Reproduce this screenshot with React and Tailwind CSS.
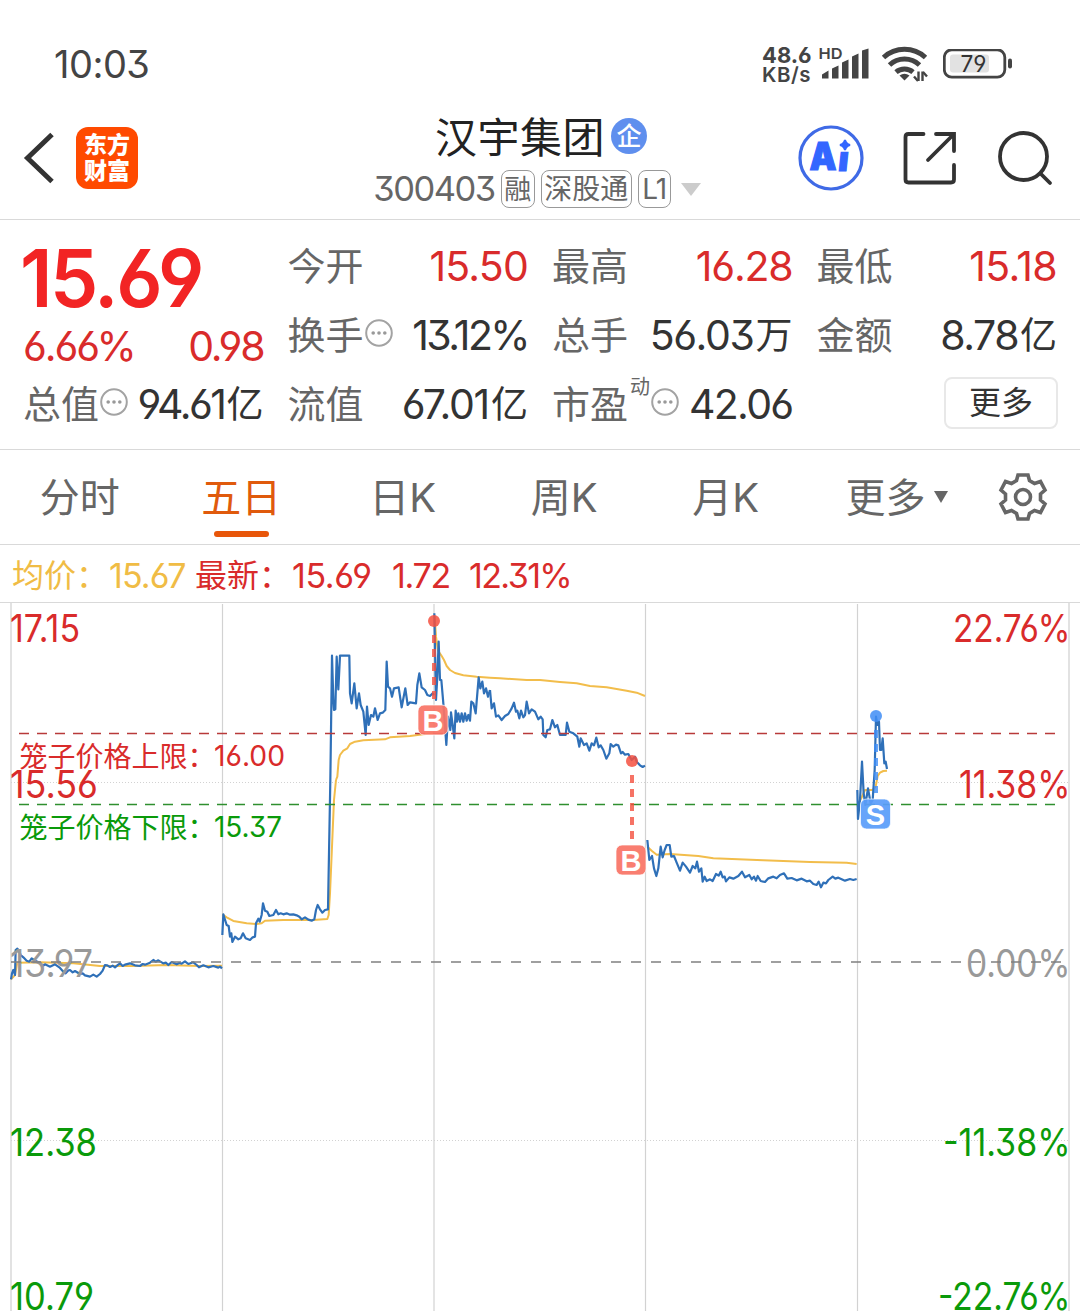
const quotes = [
  { label: "今开", value: "15.50", red: true, track: "tracking-[-0.8px]" },
  { label: "最高", value: "16.28", red: true, track: "tracking-[-1.2px]" },
  { label: "最低", value: "15.18", red: true, track: "tracking-[-0.6px]" },
  { label: "换手", value: "13.12%", info: true, track: "tracking-[-2.6px]" },
  { label: "总手", value: "56.03", unit: "万", track: "tracking-[-1.4px]" },
  { label: "金额", value: "8.78", unit: "亿", track: "tracking-[-1.5px]" },
]

const tabs = ["分时", "五日", "日K", "周K", "月K"]

const BLUE = "#2f70b8"
const GOLD = "#f2bd4b"

// price and average lines, every block has its own origin and a 1/3 scale
const blocks = [
  {
    origin: "translate(0 720) scale(0.33333)",
    avg: [
      "33,778 45,765 52,728 120,727 220,730 300,738 400,738 500,735 600,738 666,737",
      "667,583 680,592 700,603 740,610 770,612 785,610 795,602 850,600 940,600 982,597 986,585 990,520 996,380 1002,240 1008,180",
    ],
    price: [
      "33,778 36,760 40,750 45,765 47,690 52,686 57,692 62,705 70,712 80,722 88,725 95,715 105,722 120,728 128,738 135,733 150,740 165,733 178,742 190,755 197,760 204,752 210,750 218,757 225,753 240,762 248,760 255,766 270,770 280,764 290,770 300,762 308,752 315,735 322,736 330,741 338,737 345,742 352,736 360,730 368,738 375,734 390,730 405,736 420,738 428,732 435,734 450,728 460,720 467,725 475,721 490,730 498,728 505,735 515,726 530,733 538,729 545,731 555,724 565,732 580,727 590,735 597,742 610,736 625,742 640,738 655,743 660,740 666,745",
      "667,645 670,583 680,615 686,618 690,650 694,640 697,666 705,650 715,658 722,655 729,640 737,655 750,660 758,652 765,650 768,610 775,596 779,605 785,585 789,550 795,572 802,575 808,588 820,585 828,570 835,583 842,580 850,583 860,580 870,584 880,583 890,586 898,590 905,598 915,592 925,599 935,602 943,598 948,570 953,555 960,568 967,578 975,570 984,568 991,180",
    ],
  },
  {
    origin: "translate(310 600) scale(0.33333)",
    avg: [
      "78,540 82,530 86,480 90,465 100,452 112,445 120,432 135,425 160,421 225,418 240,412 300,408 340,403 372,400",
      "374,50 378,110 384,152 395,168 402,180 410,198 420,210 435,219 460,226 500,230 540,233",
    ],
    price: [
      "61,540 66,167 70,300 72,330 76,328 80,170 85,268 90,167 118,167 120,280 125,310 129,280 133,250 140,325 147,280 152,315 160,335 167,405 171,320 176,375 183,345 190,350 195,325 203,360 210,340 218,338 226,330 230,185 234,260 240,265 246,290 252,265 266,262 275,322 286,265 293,315 300,307 318,310 322,255 328,220 335,262 345,270 352,285 360,288 368,280 372,285",
      "373,40 378,300 382,230 386,125 390,240 394,240 400,310 409,435 414,350 421,390 423,337 428,375 433,415 437,332 441,365 445,340 450,365 455,340 460,365 465,340 470,362 475,345 480,362 484,305 490,310 497,340 506,232 511,265 517,245 522,280 528,265 534,290 540,270",
    ],
  },
  {
    origin: "translate(460 660) scale(0.33333)",
    avg: ["90,53 120,55 200,60 240,60 300,66 350,70 390,78 440,82 500,92 530,98 555,108"],
    price: [
      "90,90 95,145 102,130 108,170 115,166 125,180 135,168 145,162 155,145 162,128 168,155 172,152 178,175 183,152 190,172 195,165 200,125 207,160 215,148 225,155 235,178 242,170 248,178 250,225 257,232 262,210 270,208 277,180 285,202 292,195 300,225 317,225 321,188 328,215 340,220 352,230 358,260 362,235 372,255 380,250 388,272 395,250 402,256 409,233 416,262 422,256 430,270 439,296 448,280 452,252 460,260 468,254 475,256 483,280 488,276 495,284 505,282 515,300 525,290 530,305 540,316 548,321 555,317",
    ],
  },
  {
    origin: "translate(630 820) scale(0.33333)",
    avg: ["52,80 65,92 80,104 120,102 205,108 250,115 400,121 540,126 650,128 680,132"],
    price: [
      "52,60 58,120 66,108 72,145 79,168 85,145 92,80 98,112 104,90 110,75 119,75 124,110 132,108 140,128 150,152 158,128 168,140 180,158 188,138 196,145 201,125 207,155 214,145 218,185 224,170 230,183 240,178 248,183 258,162 266,167 272,155 278,172 284,170 288,184 298,172 310,176 325,168 336,155 345,172 358,165 365,178 372,170 378,182 383,168 392,183 405,186 415,175 430,170 440,175 450,165 462,160 472,176 485,174 500,181 515,176 530,184 540,182 550,192 560,195 566,185 573,202 580,188 588,190 595,180 608,170 616,176 625,173 645,182 660,177 670,180 680,177",
    ],
  },
  {
    origin: "translate(840 690) scale(0.33333)",
    avg: ["52,350 58,335 66,320 75,300 98,300 107,290 113,258 120,248 130,243 141,242"],
    price: [
      "52,300 54,387 60,330 66,215 71,310 76,345 84,295 92,340 98,330 104,240 108,80 112,105 117,95 120,180 124,180 128,145 133,220 137,215 141,237",
    ],
  },
]

const axis = [
  { y: 641.5, left: "17.15", lw: 69, right: "22.76%", rx: 953, color: "#d92b2b" },
  { y: 797.5, left: "15.56", lw: 87, right: "11.38%", rx: 959, color: "#d92b2b" },
  { y: 976.5, left: "13.97", lw: 82, right: "0.00%", rx: 966, color: "#999999" },
  { y: 1155.5, left: "12.38", lw: 86, right: "-11.38%", rx: 943, color: "#0a9a0a" },
  { y: 1310, left: "10.79", lw: 83, right: "-22.76%", rx: 938, color: "#0a9a0a" },
]

function InfoDots() {
  return (
    <svg className="size-7 shrink-0 ml-px mb-1.5" viewBox="0 0 28 28">
      <circle cx="14" cy="14" r="12.8" fill="none" stroke="#a3a3a3" strokeWidth="2" />
      <circle cx="8.2" cy="14" r="1.8" fill="#999" />
      <circle cx="14" cy="14" r="1.8" fill="#999" />
      <circle cx="19.8" cy="14" r="1.8" fill="#999" />
    </svg>
  )
}

function Value({ value, unit, red, track }) {
  return (
    <span className={`ml-auto flex items-center ${red ? "text-[#d92b2b]" : "text-[#333]"}`}>
      <span className={`text-[41px] ${track}`}>{value}</span>
      {unit && <span className="ml-0.5 text-[37px]">{unit}</span>}
    </span>
  )
}

function Quote({ label, value, unit, red, info, sup, track }) {
  return (
    <div className="flex items-center h-[69px] leading-none whitespace-nowrap">
      <span className="mb-px text-[38px] text-[#666]">{label}</span>
      {sup && <span className="text-[20px] text-[#666] self-start mt-[7px] ml-0.5">{sup}</span>}
      {info && <InfoDots />}
      <Value value={value} unit={unit} red={red} track={track} />
    </div>
  )
}

function StatusBar() {
  return (
    <div className="flex items-center h-[110px] pt-[18px] pl-[54px] pr-[67px] text-[#444]">
      <span className="text-[38px] leading-none tracking-[-0.5px]">10:03</span>
      <div className="ml-auto flex items-center">
        <div className="w-[49px] pt-0.5 text-[22px] leading-[19px] font-bold whitespace-nowrap">
          <div>48.6</div>
          <div className="text-[20.500px] font-semibold tracking-[0.5px]">KB/s</div>
        </div>
        <svg className="ml-1.5 w-[52px] h-9" viewBox="817 46 52 36" fill="#444">
          <text x="818.5" y="58.5" fontSize="15" fontWeight="600" textLength="24" lengthAdjust="spacingAndGlyphs">HD</text>
          <path d="M822 78.500v-4l6.500-4v8zM832 78.500v-10l6.500-3v13zM842 78.500v-16l6.500-3v19zM852 78.500v-22l6.500-3v25zM862 78.500v-28l6.500-2v30z" />
        </svg>
        <svg className="ml-3 w-12 h-9" viewBox="881 46 48 36" fill="none" stroke="#444" strokeWidth="5">
          <path d="M883.500 57.500a31 31 0 0 1 42 0" />
          <path d="M889.500 65a22 22 0 0 1 30 0" />
          <path d="M896 72.200a13 13 0 0 1 17 0" />
          <path d="M899.500 75.500q5-3.500 10 0l-5 5z" fill="#444" stroke="none" />
          <path d="M918.500 71.500v9.500M922.500 81v-9.500" strokeWidth="2.400" />
          <path d="M914 76.500l4 4.500M923 72l4 4.500" strokeWidth="2.400" />
        </svg>
        <svg className="ml-3.5 w-[70px] h-[30px]" viewBox="943 48.500 70 30">
          <rect x="944.300" y="49.300" width="60.500" height="27.400" rx="7.500" fill="none" stroke="#444" strokeWidth="2.800" />
          <rect x="950" y="54" width="39" height="18" rx="3" fill="#e2e2e2" />
          <rect x="1008" y="58" width="4" height="10" rx="2" fill="#444" />
          <text x="960.500" y="71" fontSize="23" fill="#333" textLength="26" lengthAdjust="spacingAndGlyphs">79</text>
        </svg>
      </div>
    </div>
  )
}

function Header() {
  return (
    <header className="flex items-center h-[110px] pb-[13px] border-b border-[#d9d9d9] leading-none">
      <div className="flex items-center w-[340px] pl-[23px]">
        <svg className="w-8 h-14" viewBox="23 130 32 56" fill="none" stroke="#333" strokeWidth="5">
          <path d="M52 134.500L27.500 158L52 181.500" />
        </svg>
        <div className="ml-[21px] flex flex-col items-center justify-center gap-[3px] size-[62px] rounded-xl bg-[#ff4a00] text-white text-[23px] font-black">
          <span>东方</span>
          <span>财富</span>
        </div>
      </div>

      <div className="w-[400px] flex flex-col items-center pt-3">
        <div className="flex items-center h-[50px] pt-[3px] pl-0.5 text-[42px] text-[#222]">
          <span className="tracking-[0.5px]">汉宇集团</span>
          <span className="ml-1.5 mb-[3px] flex items-center justify-center size-9 rounded-full bg-[#5f8fee] text-white text-[25px] font-medium">企</span>
        </div>
        <div className="flex items-center gap-1.5 h-[56px] -ml-1.5 text-[#666]">
          <span className="text-[34.5px] tracking-[-1.5px]">300403</span>
          <span className="flex items-center justify-center w-[34px] h-[38px] border-[1.500px] border-[#999] rounded-lg text-[27px]">融</span>
          <span className="flex items-center justify-center w-[91px] h-[38px] border-[1.500px] border-[#999] rounded-lg text-[28px] whitespace-nowrap">深股通</span>
          <span className="flex items-center justify-center w-[33px] h-[38px] border-[1.500px] border-[#999] rounded-lg text-[28px] tracking-[-1px]">L1</span>
          <svg className="ml-1 w-5 h-[13px]" viewBox="0 0 20 13">
            <path d="M0 0h20L10 13z" fill="#ccc" />
          </svg>
        </div>
      </div>

      <div className="flex items-center flex-1 justify-end pr-[27px]">
        <svg className="size-[66px]" viewBox="798 125 66 66">
          <circle cx="831" cy="158" r="31" fill="none" stroke="#3f6ae6" strokeWidth="3.200" />
          <g fill="#3366ff" stroke="#3366ff" strokeWidth="1.200" fontWeight="900">
            <text x="809.500" y="170" fontSize="38" textLength="27" lengthAdjust="spacingAndGlyphs">A</text>
            <text transform="translate(837.500 171) skewX(-6)" fontSize="34" textLength="13">ı</text>
            <path d="M845 140q1 4 5 5q-4 1-5 5q-1-4-5-5q4-1 5-5z" strokeWidth="2" />
          </g>
        </svg>
        <svg className="ml-[39px] w-[54px] h-[54px]" viewBox="903.500 131 54 54" fill="none" stroke="#333" strokeWidth="3.800" strokeLinecap="round">
          <path d="M924 134H909q-3 0-3 3V179.500q0 3 3 3H951.500q3 0 3-3V165" />
          <path d="M936.500 134H954.500V151M953.500 135L928.500 160" />
        </svg>
        <svg className="ml-10 size-[56px]" viewBox="997 129 56 56" fill="none" stroke="#333" strokeWidth="3.800" strokeLinecap="round">
          <circle cx="1023.500" cy="155.500" r="23.500" />
          <path d="M1040.500 172.500L1050 182" />
        </svg>
      </div>
    </header>
  )
}

function Stats() {
  return (
    <section className="h-[230px] pt-3 px-[23px] border-b border-[#d9d9d9]">
      <div className="grid grid-cols-4 gap-x-6">
        <div className="row-span-2 flex flex-col leading-none text-[#d92b2b]">
          <div className="h-[91px] flex items-center">
            <span className="-ml-[3px] text-[80px] font-semibold text-[#f22424] tracking-[-2.5px] scale-x-96 origin-left">15.69</span>
          </div>
          <div className="flex justify-between items-center h-[46px] text-[41px] tracking-[-2.1px]">
            <span>6.66%</span>
            <span>0.98</span>
          </div>
        </div>
        {quotes.map((q) => (
          <Quote key={q.label} {...q} />
        ))}
        <Quote label="总值" value="94.61" unit="亿" info track="tracking-[-2.5px]" />
        <Quote label="流值" value="67.01" unit="亿" track="tracking-[-1.3px]" />
        <Quote label="市盈" value="42.06" sup="动" info track="tracking-[-1.7px]" />
        <div className="flex items-center justify-end h-[69px] pb-1 -mr-px">
          <button className="w-[114px] h-[52px] border-2 border-[#e8e8e8] rounded-lg text-[32px] leading-none text-[#333]">更多</button>
        </div>
      </div>
    </section>
  )
}

function Tabs() {
  return (
    <nav className="flex h-[95px] border-b border-[#d9d9d9] text-[40px] leading-none text-[#666]">
      {tabs.map((t) => (
        <div
          key={t}
          className={`relative flex items-center justify-center w-[161.500px] pt-0.5 pr-0.5 ${t === "五日" ? "text-[#e05a0c]" : ""}`}
        >
          {t}
          {t === "五日" && <span className="absolute bottom-[7px] w-[55px] h-1.5 rounded-full bg-[#e8560a]" />}
        </div>
      ))}
      <div className="flex items-center w-[161.500px] pt-0.5 pl-[38px]">
        更多
        <svg className="ml-2 mb-0.5 w-3.5 h-3" viewBox="0 0 14 12">
          <path d="M0 0h14L7 12z" fill="#666" />
        </svg>
      </div>
      <div className="flex flex-1 items-center justify-center pr-[3px]">
        <svg className="size-[50px]" viewBox="-25 -25 50 50" fill="none" stroke="#666" strokeWidth="3.600">
          <path d="M-5-22H5L6.500-16.500L11.500-13.500L17.500-15.500L22-7L17.500-3V3L22 7L17.500 15.500L11.500 13.500L6.500 16.500L5 22H-5L-6.500 16.500L-11.500 13.500L-17.500 15.500L-22 7L-17.500 3V-3L-22-7L-17.500-15.500L-11.500-13.500L-6.500-16.500Z" />
          <circle r="7.500" />
        </svg>
      </div>
    </nav>
  )
}

function Legend() {
  return (
    <div className="flex items-center h-[58px] pl-3 pt-1 border-b border-[#d9d9d9] leading-none text-[34px] tracking-[-0.9px] whitespace-nowrap text-[#d92b2b]">
      <span className="w-[97px] text-[32px] tracking-normal text-[#f0bc45]">均价：</span>
      <span className="w-[86px] text-[#f0bc45]">15.67</span>
      <span className="w-[97px] text-[32px] tracking-normal">最新：</span>
      <span className="w-[100px] tracking-[-0.4px]">15.69</span>
      <span className="w-[77px] tracking-[-1.3px]">1.72</span>
      <span className="tracking-[-1.6px]">12.31%</span>
    </div>
  )
}

function Marker({ x, y, boxX, boxY, letter, color, dot }) {
  return (
    <g>
      <line x1={x} x2={x} y1={y + 14} y2={boxY - 6} stroke={dot} strokeOpacity="0.8" strokeWidth="4" strokeDasharray="8 6" />
      <circle cx={x} cy={y} r="6" fill={dot} fillOpacity="0.85" />
      <rect x={boxX} y={boxY} width="30" height="30" rx="6" fill={color} fillOpacity="0.93" stroke="#fff" strokeOpacity="0.7" />
      <text x={boxX + 15} y={boxY + 25.5} textAnchor="middle" fontSize="29" fontWeight="700" fill="#fff" fontFamily="Liberation Sans">
        {letter}
      </text>
    </g>
  )
}

function Chart() {
  return (
    <svg className="block w-[1080px] h-[708px]" viewBox="0 603 1080 708">
      <g stroke="#d2d2d2">
        <path d="M11 603V1311M1069 603V1311" stroke="#e2e2e2" strokeWidth="2" />
        <path d="M222.500 604V1311M434 604V1311M645.500 604V1311M857.500 604V1311" strokeWidth="1.200" />
        <path d="M11 782.500H1069M11 1140.500H1069" strokeDasharray="1 2" />
      </g>

      {blocks.map((b) => (
        <g key={b.origin} transform={b.origin} fill="none" strokeLinejoin="round">
          {b.avg.map((p) => (
            <polyline key={p} points={p} stroke={GOLD} strokeWidth="6" />
          ))}
          {b.price.map((p) => (
            <polyline key={p} points={p} stroke={BLUE} strokeWidth="6.600" />
          ))}
        </g>
      ))}

      {axis.map((a) => (
        <g key={a.left} fontSize="37.500" fill={a.color}>
          <text x="10" y={a.y} textLength={a.lw + 1} lengthAdjust="spacingAndGlyphs">{a.left}</text>
          <text x={a.rx} y={a.y} textLength={1070.5 - a.rx} lengthAdjust="spacingAndGlyphs">{a.right}</text>
        </g>
      ))}

      <path d="M11 962H1064" stroke="#808080" strokeWidth="1.600" strokeDasharray="10 10" />
      <path d="M19 733.500H1055" stroke="#b83a3a" strokeWidth="1.300" strokeDasharray="10 8" />
      <path d="M19 804.500H1055" stroke="#2f8f2f" strokeWidth="1.300" strokeDasharray="10 8" />

      {/* price cage limits */}
      <g fontSize="28" fill="#d92b2b">
        <text x="19.500" y="767">笼子价格上限：</text>
        <text x="214" y="766" fontSize="28.500" textLength="71" lengthAdjust="spacingAndGlyphs">16.00</text>
      </g>
      <g fontSize="28" fill="#0a9a0a">
        <text x="19.500" y="838">笼子价格下限：</text>
        <text x="214" y="837" fontSize="28.500" textLength="68" lengthAdjust="spacingAndGlyphs">15.37</text>
      </g>

      <Marker x={434} y={621} boxX={418} boxY={705} letter="B" color="#f97466" dot="#f4503f" />
      <Marker x={632} y={761} boxX={616} boxY={845} letter="B" color="#f97466" dot="#f4503f" />
      <Marker x={876} y={716} boxX={860.5} boxY={799} letter="S" color="#5a9dfa" dot="#3f8df5" />
    </svg>
  )
}

export default function App() {
  return (
    <main className="w-[1080px] h-[1311px] overflow-hidden bg-white font-['Inter','Noto_Sans_CJK_SC',sans-serif] [font-feature-settings:'cv03','cv04','cv09']">
      <StatusBar />
      <Header />
      <Stats />
      <Tabs />
      <Legend />
      <Chart />
    </main>
  )
}
